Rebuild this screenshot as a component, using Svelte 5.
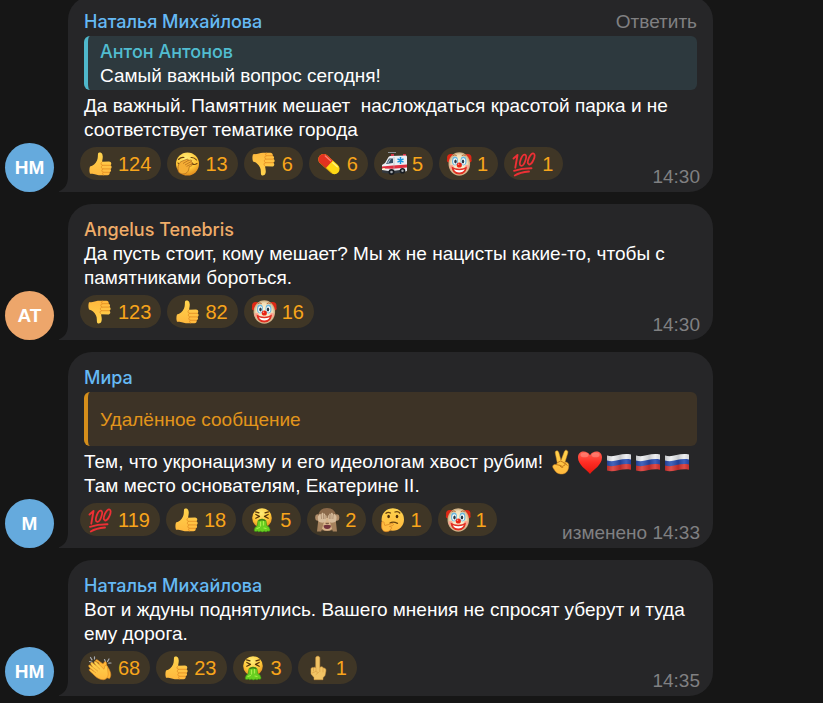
<script>
  const messages = [
    {
      author: 'Наталья Михайлова', initials: 'НМ', tone: 'blue', time: '14:30', canReply: true,
      quote: { author: 'Антон Антонов', text: 'Самый важный вопрос сегодня!' },
      lines: ['Да важный. Памятник мешает\u00a0 наслождаться красотой парка и не соответствует тематике города'],
      reactions: [['up', 124], ['palm', 13], ['down', 6], ['pill', 6], ['ambulance', 5], ['clown', 1], ['hundred', 1]]
    },
    {
      author: 'Angelus Tenebris', initials: 'AT', tone: 'orange', time: '14:30',
      lines: ['Да пусть стоит, кому мешает? Мы ж не нацисты какие-то, чтобы с памятниками бороться.'],
      reactions: [['down', 123], ['up', 82], ['clown', 16]]
    },
    {
      author: 'Мира', initials: 'М', tone: 'blue', time: '14:33', edited: true,
      quote: { deleted: true, text: 'Удалённое сообщение' },
      lines: ['Тем, что укронацизму и его идеологам хвост рубим!', 'Там место основателям, Екатерине II.'],
      emoji: ['victory', 'heart', 'flag', 'flag', 'flag'],
      reactions: [['hundred', 119], ['up', 18], ['sick', 5], ['monkey', 2], ['think', 1], ['clown', 1]]
    },
    {
      author: 'Наталья Михайлова', initials: 'НМ', tone: 'blue', time: '14:35',
      lines: ['Вот и ждуны поднятулись. Вашего мнения не спросят уберут и туда ему дорога.'],
      reactions: [['clap', 68], ['up', 23], ['sick', 3], ['finger', 1]]
    }
  ];
</script>

{#snippet hand()}
  <path fill="url(#skin)" d="M2 14.5C5 14 7.5 11.5 9 8.5 10.2 6 9.7 3.5 10 1.8 10.3 0 13.4-.2 14.4 2.4 15.3 5 14.4 7.6 14 9.8L21 9.5C23.6 9.5 24 12.6 22.2 13.3 24.2 14 24 16.6 22.4 17 23.6 17.8 23.2 20 21.5 20.3 22.2 21.8 21.2 23.2 19.5 23.3H12C8.5 23.3 7 21.6 2 21.8 1.2 19.5 1.2 17 2 14.5Z" />
  <path fill="none" stroke="#e18a22" stroke-width=".8" stroke-linecap="round" d="M14 10C12.5 10.8 12.5 13 14.5 13.3H22M14.5 13.3C12.8 14 13 16.4 14.8 16.9H22.2M14.8 16.9C13.2 17.6 13.5 19.9 15.2 20.3H21.5M15.2 20.3C14 21 14.4 22.6 15.5 23" />
{/snippet}

{#snippet icon(name)}
  <svg class="emoji" viewBox="0 0 24 24" aria-hidden="true">
    {#if name === 'up'}
      {@render hand()}
    {:else if name === 'down'}
      <g transform="translate(-1 24) scale(1 -1)">{@render hand()}</g>
    {:else if name === 'palm'}
      <circle cx="12.5" cy="12" r="11.5" fill="url(#face)" />
      <path fill="none" stroke="#69400e" stroke-width="1.1" stroke-linecap="round" d="M3.5 7.5Q6 5 9 5.5M16 5.5Q19 5 21.5 8M17 11.5Q19 13.5 22 11.5M3 11Q4 12.5 6 12.5" />
      <path fill="#f5ae35" stroke="#a9651a" stroke-width=".7" stroke-linejoin="round" d="M3.5 20C2 15 4 10 7 9.2L12 7.2C13.5 6.8 13.7 8.2 12.7 8.8L15.5 8C17 7.8 17 9.3 15.8 9.8L17 10C18 10.6 17.3 11.7 16.3 12L17 12.8C17 14.2 15.5 14.4 14.4 14.4L13.6 18C11.8 22.4 7 23.4 3.5 20Z" />
      <path fill="none" stroke="#a9651a" stroke-width=".7" d="M8 11.5 12.7 8.8M10 13 15.8 9.8M11.5 14.4 16.3 12" />
    {:else if name === 'pill'}
      <g transform="rotate(42 12 12)">
        <rect x="-.5" y="6.8" width="25" height="10.6" rx="5.3" fill="#ffd915" />
        <path d="M12.5 6.8H4.8a5.3 5.3 0 0 0 0 10.6H12.5Z" fill="#e23220" />
        <path d="M4 8.5H11" stroke="#ff8170" stroke-width="1.5" stroke-linecap="round" />
        <path d="M14 8.5H20" stroke="#fff47e" stroke-width="1.5" stroke-linecap="round" />
        <path d="M5 17H20" stroke="#9c5b00" stroke-opacity=".45" />
      </g>
    {:else if name === 'ambulance'}
      <path fill="#8c8f94" d="M6 0H14V1H6Z" />
      <path fill="#d73447" d="M9 2H12V5H9ZM21 2H24V5H21Z" />
      <path fill="#eceef2" d="M8 4 24 3.5Q25 3.5 25 5V19L20 20.5H5L0 18.5V13L3 11 6.5 5Z" />
      <path fill="#354c61" d="M7 6.5H11V11L4 12Z" />
      <path fill="#a9c2d4" d="M7.5 7.5 9 7 6.5 11 5 11.3Z" />
      <path fill="#df2e3e" d="M0 14.5 11 13.5 25 12.5V15.5L11 16.7 0 16.5Z" />
      <path stroke="#1695df" stroke-width="1.5" d="M18.5 5V12M15.5 6.8 21.5 10.2M21.5 6.8 15.5 10.2" />
      <path stroke="#aeb2b7" stroke-width=".6" d="M12 5V19" />
      <path fill="#33383d" d="M0 18 8 19.2 22 17.5V20.5L8 22 0 20.5Z" />
      <circle cx="9.5" cy="20" r="3" fill="#171b20" /><circle cx="9.5" cy="20" r="1.3" fill="#a5a9ad" />
      <circle cx="20.5" cy="18.8" r="2.8" fill="#171b20" /><circle cx="20.5" cy="18.8" r="1.2" fill="#a5a9ad" />
      <circle cx="2" cy="17" r="1" fill="#fff6ad" />
    {:else if name === 'clown'}
      <circle cx="4" cy="6" r="4" fill="#df2815" /><circle cx="20.5" cy="6" r="4" fill="#df2815" />
      <circle cx="1.9" cy="8.5" r="2" fill="#df2815" /><circle cx="22.6" cy="8.5" r="2" fill="#df2815" />
      <ellipse cx="12.3" cy="12" rx="10.8" ry="11.7" fill="url(#cream)" />
      <ellipse cx="8" cy="9" rx="3" ry="4.4" fill="#6bb8df" /><ellipse cx="16.5" cy="9" rx="3" ry="4.4" fill="#6bb8df" />
      <ellipse cx="8.2" cy="9.4" rx="2" ry="3.1" fill="#fff" /><ellipse cx="16.3" cy="9.4" rx="2" ry="3.1" fill="#fff" />
      <ellipse cx="8.5" cy="9.5" rx="1.2" ry="2" fill="#263846" /><ellipse cx="16" cy="9.5" rx="1.2" ry="2" fill="#263846" />
      <path fill="none" stroke="#b7612d" stroke-width=".9" stroke-linecap="round" d="M6 3.5Q8 2 9.5 3.5M15 3.5Q17 2 18.5 3.5" />
      <circle cx="4.6" cy="15" r="2.2" fill="#ff9b8c" opacity=".8" /><circle cx="20" cy="15" r="2.2" fill="#ff9b8c" opacity=".8" />
      <path fill="#e12e22" d="M4.5 14.5Q12.3 19 20 14.5 19.6 22.3 12.3 22.5 5 22.3 4.5 14.5Z" />
      <path fill="#fff" d="M6.8 17.2Q12.3 19.5 17.8 17.2 16 20.5 12.3 20.5 8.5 20.5 6.8 17.2Z" />
      <circle cx="12.3" cy="13" r="2.6" fill="#e82313" /><circle cx="11.5" cy="12.2" r=".8" fill="#ff9388" />
    {:else if name === 'hundred'}
      <g fill="none" stroke="#ed3035" stroke-linecap="round" stroke-linejoin="round">
        <path stroke-width="1.9" d="M1.5 6.5 5.5 3 3.3 15.7" />
        <ellipse cx="11" cy="8.2" rx="2.4" ry="5.9" transform="rotate(20 11 8.2)" stroke-width="1.8" />
        <ellipse cx="19.2" cy="6.9" rx="2.5" ry="5.9" transform="rotate(23 19.2 6.9)" stroke-width="1.8" />
        <path stroke-width="1.9" d="M2 18.8Q10 16.2 19.5 16.3M2.8 23.5Q8 20.2 17 19.5" />
      </g>
    {:else if name === 'sick'}
      <circle cx="12" cy="10" r="9.8" fill="url(#face)" />
      <path fill="none" stroke="#57340a" stroke-width="1.2" stroke-linecap="round" stroke-linejoin="round" d="M5.8 6.5 9.5 8.4 5.8 10.3M18.2 6.5 14.5 8.4 18.2 10.3M5.5 3.8 9 4.8M18.5 3.8 15 4.8" />
      <path fill="#68ce20" stroke="#358e13" stroke-width=".6" d="M8 12.5Q12 9.5 16 12.5L16.7 17.5Q19.7 18.6 20 21.5C20 24 18.2 23.3 17.5 23Q16 24.8 14.5 23.2 12 24.8 10.5 23.2 8.5 24.6 7.5 23 3.8 24.6 4.3 21.5 4.7 19 7.2 17.7Z" />
      <path stroke="#a7ed4a" stroke-width="1.2" stroke-linecap="round" d="M10.5 14V18M13.5 13V17M7 20.5 9.5 19.5M14 20 16 20.5" />
      <path fill="#427b17" d="M8.6 12Q12 10 15.4 12L15 13.2Q12 12 9 13.2Z" />
    {:else if name === 'monkey'}
      <ellipse cx="2.7" cy="9.5" rx="2.5" ry="3.2" fill="#b18d69" /><ellipse cx="21.8" cy="9.5" rx="2.5" ry="3.2" fill="#b18d69" />
      <path fill="#8b694a" d="M12 0C6 0 3 4 3.2 9L4 20C5 24 19 24 20 20L21 9C21.3 4 18 0 12 0Z" />
      <ellipse cx="12.2" cy="16.3" rx="7" ry="6.5" fill="#d8b48b" />
      <path fill="#a6825d" d="M3.5 10 2 23.5H6.2L9 14ZM20.5 10 22 23.5H17.8L15 14Z" />
      <path fill="#d7bc9b" d="M2.8 9C4 6 5 5 6.2 7L7 4.8Q8.3 4.2 8.5 6 10.3 4.6 10.2 7 12.1 6.7 11.6 9.5L11.2 13C10 15.3 5 15.2 3.2 13ZM21.6 9C20.5 6 19.5 5 18.2 7L17.4 4.8Q16.1 4.2 15.9 6 14.1 4.6 14.2 7 12.3 6.7 12.8 9.5L13.2 13C14.4 15.3 19.4 15.2 21.2 13Z" />
      <path fill="none" stroke="#98775a" stroke-width=".6" d="M6.2 7 6.6 11M8.5 6V11M10.2 7 10 11M18.2 7 17.8 11M15.9 6V11M14.2 7 14.4 11" />
      <path fill="#74343d" d="M8.5 17.5Q12 16.2 16 17.5 15.8 21 12.2 21 8.7 21 8.5 17.5Z" />
      <path stroke="#684833" stroke-width="1" stroke-linecap="round" d="M11 15.3H13.5" />
    {:else if name === 'think'}
      <circle cx="12.8" cy="11.5" r="11.2" fill="url(#skin)" />
      <path fill="none" stroke="#68420d" stroke-width="1.3" stroke-linecap="round" d="M6 5.3Q8 3.5 10.5 5M15 4Q18 2.8 19.8 5M10 15Q13 13.2 17.5 15.3" />
      <ellipse cx="8.6" cy="8.5" rx="1.3" ry="1.8" fill="#4b2d09" /><ellipse cx="17" cy="8.5" rx="1.3" ry="1.8" fill="#4b2d09" />
      <path fill="#ffbd42" stroke="#d98322" stroke-width=".7" d="M1.8 14C3 13 4.3 14 4.2 15.5L4.8 17.5 12 15.5C13.8 15.3 14 17 12.4 17.6L9.5 18.5C12.5 19 12 21 10.6 21 10.4 24 4.5 24.6 2.8 22.2 1 20 1.6 16 1.8 14Z" />
    {:else if name === 'clap'}
      <path fill="none" stroke="#a9adb4" stroke-width="1.2" stroke-linecap="round" d="M1.5 5.5 4 6.3M2.5 1.5 4 3.8M6.5.8V3M16.5 3.5 17.5 5.8M21 3 19.5 5.5M23 7 20.8 7.2" />
      <path fill="#ffb737" stroke="#dd8a23" stroke-width=".6" d="M11 7 8 5.3C6.7 4.4 8.3 3 9.5 4L15 8 16.5 5.9C18 5 19 7 18.5 9L21 13C23 17 23.5 20 21.5 22.5 17 22 11 16 11 7Z" />
      <path fill="url(#skin)" stroke="#dd8a23" stroke-width=".6" d="M2 12 1 10.8C0 9.4 1.4 8.5 2.5 9.5L4.5 11 2.8 8.2C2.3 6.6 4 6 5 7.2L8 9.5 6.2 7C5.6 5.4 7.3 4.8 8.5 6L16 13.2 17 9.6C18.5 8.6 19.7 10.5 19.5 12.2L20 16C20.8 19 19.5 23.5 15.5 23.7 10 23.7 7 20 4.5 17.6L1.8 15.1C.6 13.5 1.5 12.4 2.8 13.2L5.5 15.2Z" />
      <path fill="none" stroke="#e09532" stroke-width=".7" d="M2 12 8 17M4.5 11 10 15.3M8 9.5 12 13.3" />
    {:else if name === 'finger'}
      <path fill="#f2c465" stroke="#d69c42" stroke-width=".5" d="M9.7 12V2C9.7-.4 13.8-.4 13.8 2V11.5C15 10.2 17 10.5 17 12 19 11.8 20.3 13 19.9 15L19 19.5 17 21.7V23.7H8V21.5L5 18V14C4.6 12 6.2 10.7 7.6 11.8 8.1 10.8 9.3 11 9.7 12Z" />
      <path fill="none" stroke="#d69c42" stroke-width=".6" stroke-linecap="round" d="M7.5 12V15M10 12V15.3M13.8 11.5V15.5M17 12V16M6 17Q10 14.3 12.5 16.5L10 18.5" />
    {:else if name === 'victory'}
      <path fill="url(#skin)" stroke="#d48a25" stroke-width=".5" d="M8.3 13 6.3 3.2C5.8.5 9 0 9.8 2.5L12 10.5 15.4 1.5C16.4-1 19.6.3 18.8 3L16 12C18.5 12 20.2 13.5 19.7 16.5 19.3 21.5 16.3 24.5 11.5 24 7.5 23.8 5.8 20.6 4 17.8 2.8 15.4 5.5 13.6 7 14.8Z" />
      <path fill="none" stroke="#bd7216" stroke-width=".9" stroke-linecap="round" d="M8.5 12.5Q11.5 9.8 14.3 12.2L16.3 14.8Q13.3 17.8 10.5 15.3L7 14.5M15.8 12.5 18.2 15.5M10.5 15.3Q11.8 18 13.8 17.5" />
    {:else if name === 'heart'}
      <path fill="url(#love)" d="M12 24C8.5 19.5 0 15 0 7.5 0 0 9 0 12 5.2 15 0 24 0 24 7.5 24 15 15.5 19.5 12 24Z" />
      <ellipse cx="6.5" cy="5" rx="4" ry="2.3" fill="#ff9688" opacity=".55" /><ellipse cx="17.5" cy="5" rx="4" ry="2.3" fill="#ff9688" opacity=".55" />
    {:else if name === 'flag'}
      <path fill="#eceef1" d="M0 5.5C8 8 14 2.5 24 4.5V10.5C14 8.5 8 14 0 11Z" />
      <path fill="#264bb0" d="M0 10.5C8 13 14 7.5 24 9.5V15.5C14 13.5 8 18.5 0 16Z" />
      <path fill="#d9332f" d="M0 15.5C8 18 14 12.5 24 14.5V19.7C14 17.7 8 23 0 20.5Z" />
      <path fill="url(#wave)" d="M0 5.5C8 8 14 2.5 24 4.5V19.7C14 17.7 8 23 0 20.5Z" />
    {/if}
  </svg>
{/snippet}

<svg class="defs" aria-hidden="true">
  <defs>
    <linearGradient id="skin" x1="0" y1="0" x2="0" y2="1"><stop stop-color="#ffd44e" /><stop offset="1" stop-color="#ffb83d" /></linearGradient>
    <radialGradient id="face" cx=".45" cy=".25" r=".85"><stop stop-color="#ffed78" /><stop offset=".55" stop-color="#ffc637" /><stop offset="1" stop-color="#d87914" /></radialGradient>
    <radialGradient id="cream"><stop stop-color="#fff9df" /><stop offset=".75" stop-color="#f2dfb8" /><stop offset="1" stop-color="#c7a77b" /></radialGradient>
    <linearGradient id="love" x1="0" y1="0" x2="0" y2="1"><stop stop-color="#ff6252" /><stop offset=".5" stop-color="#ff2c23" /><stop offset="1" stop-color="#e3160d" /></linearGradient>
    <linearGradient id="wave"><stop stop-color="#000" stop-opacity=".18" /><stop offset=".25" stop-color="#fff" stop-opacity=".14" /><stop offset=".55" stop-color="#000" stop-opacity=".15" /><stop offset=".8" stop-color="#fff" stop-opacity=".12" /><stop offset="1" stop-color="#000" stop-opacity=".1" /></linearGradient>
  </defs>
</svg>

<main class="chat">
  {#each messages as m}
    <article class="message {m.tone}">
      <div class="avatar" aria-hidden="true">{m.initials}</div>
      <div class="bubble">
        <svg class="tail" viewBox="0 0 10 16" aria-hidden="true"><path d="M9 0V0H10V16H0V15.3C6 13 9 8 9 0Z" /></svg>
        <header>
          <span class="author">{m.author}</span>
          {#if m.canReply}<button class="reply">Ответить</button>{/if}
        </header>
        {#if m.quote}
          <blockquote class:deleted={m.quote.deleted}>
            {#if m.quote.author}<span class="cited">{m.quote.author}</span>{/if}
            <span>{m.quote.text}</span>
          </blockquote>
        {/if}
        {#each m.lines as line, i}
          <p>{line}{#if i === 0 && m.emoji}<span class="inline-emoji">{#each m.emoji as e}{@render icon(e)}{/each}</span>{/if}</p>
        {/each}
        <footer>
          <div class="reactions">
            {#each m.reactions as [name, count]}
              <button class="chip">{@render icon(name)}<span>{count}</span></button>
            {/each}
          </div>
          <span class="meta">{m.edited ? 'изменено ' : ''}<time>{m.time}</time></span>
        </footer>
      </div>
    </article>
  {/each}
</main>

<style>
  :global(body) {
    background: #161616;
    overflow: hidden;
  }
  .defs {
    position: absolute;
    width: 0;
    height: 0;
  }
  .chat {
    display: flex;
    flex-direction: column;
    gap: 12px;
    max-width: 708px;
    margin-top: -4px;
    padding: 0 16px 7px 5px;
    font: 19px/24px "Liberation Sans", Arial, sans-serif;
    color: #fff;
  }
  button {
    border: 0;
    padding: 0;
    background: none;
    color: inherit;
    font: inherit;
    cursor: pointer;
  }
  .message {
    display: flex;
    align-items: flex-end;
    gap: 14px;
    --accent: #65b9f4;
    --disc: #65aadd;
  }
  .orange {
    --accent: #efac68;
    --disc: #eda66b;
  }
  .avatar {
    flex: none;
    width: 49px;
    height: 49px;
    border-radius: 50%;
    background: var(--disc);
    font-weight: bold;
    line-height: 49px;
    text-align: center;
  }
  .bubble {
    position: relative;
    flex: 1;
    min-width: 0;
    box-sizing: border-box;
    padding: 14px 16px 12px;
    border-radius: 24px 24px 24px 0;
    background: #262628;
  }
  .tail {
    position: absolute;
    left: -9px;
    bottom: 0;
    width: 10px;
    height: 16px;
    fill: #262628;
  }
  header {
    display: flex;
    justify-content: space-between;
  }
  .author,
  .cited {
    color: var(--accent);
    font-family: Inter, "Liberation Sans", sans-serif;
    font-size: 18px;
    font-weight: 500;
  }
  .reply,
  .meta {
    color: #808082;
  }
  blockquote {
    display: flex;
    flex-direction: column;
    justify-content: center;
    min-height: 54px;
    box-sizing: border-box;
    margin: 2px 0 4px;
    padding: 4px 12px 2px;
    border-left: 4px solid #4fb7cb;
    border-radius: 6px;
    background: #2d393e;
  }
  .cited {
    color: #51bdd1;
  }
  .deleted {
    border-color: #d58e1b;
    background: #3d3326;
    color: #e2951b;
  }
  p {
    margin: 0;
  }
  .emoji {
    flex: none;
    width: 24px;
    height: 24px;
    overflow: visible;
  }
  .inline-emoji {
    display: inline-flex;
    gap: 5px;
    height: 24px;
    margin-left: 6px;
    vertical-align: top;
  }
  footer {
    display: flex;
    justify-content: space-between;
    align-items: flex-end;
    gap: 8px;
    margin: 5px -3px 0 -4px;
  }
  .reactions {
    display: flex;
    flex-wrap: wrap;
    gap: 6px;
  }
  .chip {
    display: flex;
    align-items: center;
    gap: 6px;
    height: 33px;
    padding: 0 10px 0 8px;
    border-radius: 17px;
    background: #3f3626;
    color: #f8a51b;
    font-size: 20px;
  }
  .meta {
    white-space: nowrap;
    margin-bottom: -9px;
  }
</style>
